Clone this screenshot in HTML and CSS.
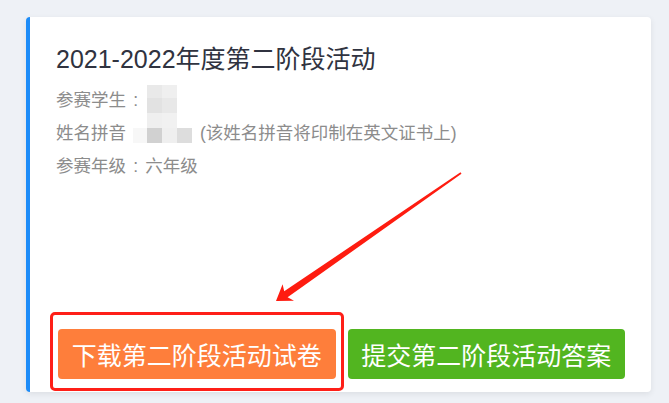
FILE: index.html
```html
<!DOCTYPE html>
<html lang="zh-CN">
<head>
  <meta charset="UTF-8">
  <meta name="viewport" content="width=device-width, initial-scale=1.0">
  <title>第二阶段活动</title>
  <link rel="stylesheet" href="styles.css">
</head>
<body>

  <div class="card">
    <div class="card-title">2021-2022年度第二阶段活动</div>

    <div class="info-row">参赛学生<span class="colon">:</span></div>
    <div class="info-row">姓名拼音<span class="pinyin-space"></span>(该姓名拼音将印制在英文证书上)</div>
    <div class="info-row">参赛年级<span class="colon">:</span>六年级</div>

    <!-- 打码的学生姓名 -->
    <div class="mosaic">
      <span class="cell c1 r1 g1"></span>
      <span class="cell c2 r1 g2"></span>
      <span class="cell c1 r2 g3"></span>
      <span class="cell c2 r2 g4"></span>
      <span class="cell c1 r3 g2"></span>
      <span class="cell c2 r3 g5"></span>
      <span class="cell c0 r4 g6"></span>
      <span class="cell c1 r4 g7"></span>
      <span class="cell c2 r4 g2"></span>
      <span class="cell c3 r4 g8"></span>
    </div>

    <div class="card-actions">
      <button class="btn btn-orange">下载第二阶段活动试卷</button>
      <button class="btn btn-green">提交第二阶段活动答案</button>
    </div>

    <!-- 标注框 -->
    <div class="mark-frame"></div>
  </div>

  <!-- 标注箭头 -->
  <svg class="mark-arrow" viewBox="0 0 669 403" width="669" height="403">
    <polygon fill="#fe1c10" points="276,301 282.6,284.2 284.2,291.3 460.5,172.3 461.5,173.7 287.6,297.3 294,300.7"/>
  </svg>

</body>
</html>
```

FILE: styles.css
```css
body {
  margin: 0;
  padding: 17px 18px 11px 26px;
  background: #eef1f6;
  font-family: "Liberation Sans", "Noto Sans CJK SC", sans-serif;
  position: relative;
  height: 403px;
  box-sizing: border-box;
  overflow: hidden;
}
.card {
  position: relative;
  height: 375px;
  box-sizing: border-box;
  background: #fff;
  border-left: 4px solid #1d8cf8;
  border-radius: 4px;
  box-shadow: 0 2px 6px rgba(0, 0, 0, 0.08);
  padding: 24px 26px 13px 26px;
  display: flex;
  flex-direction: column;
}
.card-title {
  font-size: 25px;
  line-height: 36px;
  color: #303340;
  margin-bottom: 7px;
}
.info-row {
  font-size: 17.5px;
  line-height: 33px;
  color: #8c8c8c;
}
.colon {
  display: inline-block;
  width: 1.1em;
  text-align: center;
}
.pinyin-space {
  display: inline-block;
  width: 74px;
}

/* 打码区域 */
.mosaic {
  position: absolute;
  left: 103px;
  top: 66px;
  width: 60px;
  height: 62px;
}
.cell {
  position: absolute;
  width: 15px;
  height: 15px;
  filter: blur(0.6px);
}
.c0 { left: 0; width: 14px; }
.c1 { left: 14px; }
.c2 { left: 29px; }
.c3 { left: 44px; }
.r1 { top: 2px; height: 13px; }
.r2 { top: 15px; }
.r3 { top: 30px; }
.r4 { top: 45px; }
.g1 { background: #e9e9e9; }
.g2 { background: #efefef; }
.g3 { background: #e2e2e2; }
.g4 { background: #e8e8e8; }
.g5 { background: #f1f1f1; }
.g6 { background: #f7f7f7; }
.g7 { background: #d1d1d1; }
.g8 { background: #dddddd; }

.card-actions {
  margin-top: auto;
  display: flex;
  gap: 12px;
  padding-left: 2px;
}
.btn {
  width: 278px;
  height: 50px;
  border: none;
  border-radius: 4px;
  color: #fff;
  font-family: "Liberation Sans", "Noto Sans CJK SC", sans-serif;
  font-size: 25px;
  padding: 0;
  cursor: pointer;
}
.btn-orange {
  background: #fe7e3b;
}
.btn-green {
  background: #52b520;
}

/* 标注 */
.mark-frame {
  position: absolute;
  left: 20px;
  top: 295px;
  width: 294px;
  height: 79px;
  box-sizing: border-box;
  border: 3px solid #fe1f18;
  border-radius: 5px;
}
.mark-arrow {
  position: absolute;
  left: 0;
  top: 0;
  pointer-events: none;
}
```
